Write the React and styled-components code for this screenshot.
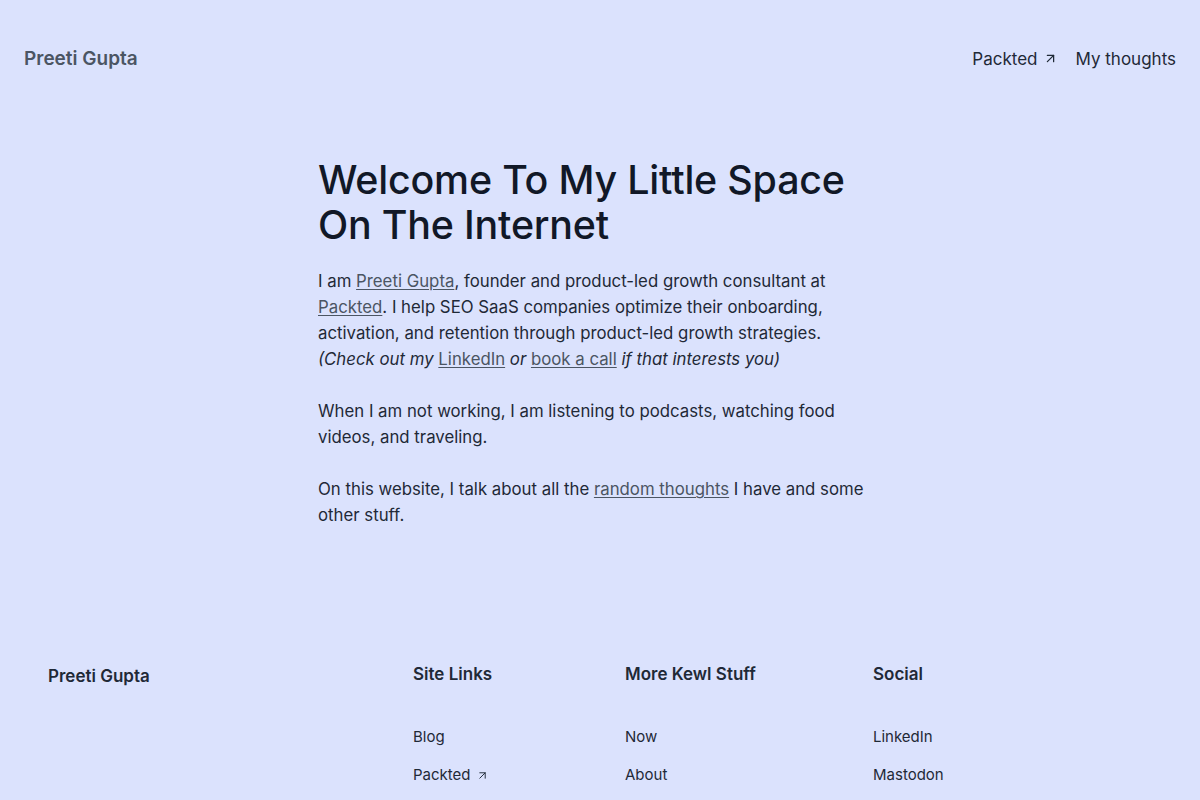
import React from 'react';
import styled, { createGlobalStyle } from 'styled-components';
import { ArrowUpRight } from 'lucide-react';

const GlobalStyle = createGlobalStyle`
  html, body {
    margin: 0;
    padding: 0;
    background: #dbe2fd;
    font-family: Inter, "Noto Sans", sans-serif;
    color: #1f2937;
  }
  * { box-sizing: border-box; }
`;

const Page = styled.div`
  min-height: 100vh;
  display: flex;
  flex-direction: column;
`;

const Header = styled.header`
  display: flex;
  align-items: center;
  justify-content: space-between;
  height: 117px;
  padding: 0 24px;
`;

const Brand = styled.a`
  font-size: 19px;
  font-weight: 600;
  color: #4b5563;
  text-decoration: none;
`;

const Nav = styled.nav`
  display: flex;
  align-items: center;
  gap: 18px;
`;

const NavLink = styled.a`
  display: inline-flex;
  align-items: center;
  gap: 5px;
  font-size: 17px;
  color: #1f2937;
  text-decoration: none;
`;

const Main = styled.main`
  width: 564px;
  margin: 41px auto 0 318px;
`;

const Title = styled.h1`
  margin: 0 0 20px;
  font-size: 39.4px;
  line-height: 45px;
  font-weight: 500;
  color: #111827;
  letter-spacing: -0.2px;
`;

const Para = styled.p`
  margin: 0 0 26px;
  font-size: 16.8px;
  line-height: 26px;
  color: #1f2937;
`;

const Aside = styled.em`
  font-style: italic;
`;

const TextLink = styled.a`
  font-style: normal;
  color: #4b5563;
  text-decoration: underline;
  text-underline-offset: 2px;
  text-decoration-thickness: 1px;
`;

const Footer = styled.footer`
  display: grid;
  grid-template-columns: 365px 212px 248px 1fr;
  padding: 0 48px;
  margin-top: 108px;
`;

const FootBrand = styled.div`
  font-size: 17px;
  font-weight: 600;
  color: #1f2937;
  padding-top: 4px;
`;

const Column = styled.div`
  display: flex;
  flex-direction: column;
`;

const ColTitle = styled.h3`
  margin: 0 0 32px;
  font-size: 17px;
  font-weight: 600;
  line-height: 24px;
  color: #1f2937;
`;

const FootLink = styled.a`
  display: inline-flex;
  align-items: center;
  gap: 5px;
  font-size: 15px;
  line-height: 38px;
  color: #1f2937;
  text-decoration: none;
`;

const columns = [
  { title: 'Site Links', links: [{ label: 'Blog' }, { label: 'Packted', out: true }] },
  { title: 'More Kewl Stuff', links: [{ label: 'Now' }, { label: 'About' }] },
  { title: 'Social', links: [{ label: 'LinkedIn' }, { label: 'Mastodon' }] },
];

const App = () => (
  <Page>
    <GlobalStyle />
    <Header>
      <Brand href="#">Preeti Gupta</Brand>
      <Nav>
        <NavLink href="#">
          Packted <ArrowUpRight size={15} strokeWidth={2} />
        </NavLink>
        <NavLink href="#">My thoughts</NavLink>
      </Nav>
    </Header>

    <Main>
      <Title>Welcome To My Little Space On The Internet</Title>
      <Para>
        I am <TextLink href="#">Preeti Gupta</TextLink>, founder and product-led growth consultant at{' '}
        <TextLink href="#">Packted</TextLink>. I help SEO SaaS companies optimize their onboarding,
        activation, and retention through product-led growth strategies.{' '}
        <Aside>
          (Check out my <TextLink href="#">LinkedIn</TextLink> or <TextLink href="#">book a call</TextLink> if
          that interests you)
        </Aside>
      </Para>
      <Para>
        When I am not working, I am listening to podcasts, watching food videos, and traveling.
      </Para>
      <Para>
        On this website, I talk about all the <TextLink href="#">random thoughts</TextLink> I have and some
        other stuff.
      </Para>
    </Main>

    <Footer>
      <FootBrand>Preeti Gupta</FootBrand>
      {columns.map((col) => (
        <Column key={col.title}>
          <ColTitle>{col.title}</ColTitle>
          {col.links.map((l) => (
            <FootLink href="#" key={l.label}>
              {l.label}
              {l.out && <ArrowUpRight size={13} strokeWidth={1.75} />}
            </FootLink>
          ))}
        </Column>
      ))}
    </Footer>
  </Page>
);

export default App;
